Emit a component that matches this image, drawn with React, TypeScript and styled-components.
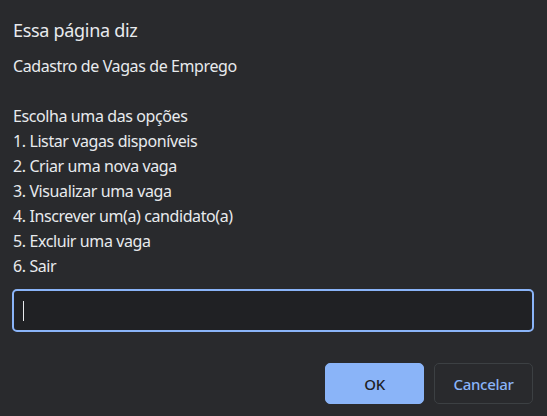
import React from "react"
import styled, { createGlobalStyle } from "styled-components"

const GlobalStyle = createGlobalStyle`
    html, body {
        margin: 0;
        padding: 0;
        background: #292a2d;
    }
    body {
        font-family: "Noto Sans", "Open Sans", sans-serif;
        color: #e8eaed;
    }
`

const Dialog = styled.div`
    width: 547px;
    height: 416px;
    box-sizing: border-box;
    padding: 18px 13px 12px 12px;
    display: flex;
    flex-direction: column;
    background: #292a2d;
`

const Title = styled.h1`
    margin: 0 0 0 1px;
    font-size: 18px;
    line-height: 24px;
    font-weight: 400;
    letter-spacing: -0.3px;
`

const Message = styled.div`
    margin: 12px 0 0 1px;
    font-size: 16px;
    line-height: 25px;
    letter-spacing: -0.4px;
    white-space: pre-line;
`

const Field = styled.div`
    margin-top: 10px;
    height: 43px;
    box-sizing: border-box;
    border: 2px solid #8ab4f8;
    border-radius: 5px;
    background: #202124;
    display: flex;
    align-items: center;
    padding-left: 9px;
`

const Caret = styled.span`
    width: 1px;
    height: 20px;
    background: #e8eaed;
`

const Actions = styled.div`
    margin-top: auto;
    display: flex;
    justify-content: flex-end;
    gap: 10px;
    padding-right: 1px;
`

const Button = styled.button<{ $primary?: boolean }>`
    width: 99px;
    height: 41px;
    box-sizing: border-box;
    border-radius: 5px;
    font-family: inherit;
    font-size: 15px;
    font-weight: 500;
    letter-spacing: -0.3px;
    cursor: pointer;
    border: 1px solid ${({ $primary }) => ($primary ? "#8ab4f8" : "#3c4043")};
    background: ${({ $primary }) => ($primary ? "#8ab4f8" : "#292a2d")};
    color: ${({ $primary }) => ($primary ? "#202124" : "#8ab4f8")};
`

const message = `Cadastro de Vagas de Emprego

Escolha uma das opções
1. Listar vagas disponíveis
2. Criar uma nova vaga
3. Visualizar uma vaga
4. Inscrever um(a) candidato(a)
5. Excluir uma vaga
6. Sair`

const App = () => {
    return (
        <>
            <GlobalStyle />
            <Dialog>
                <Title>Essa página diz</Title>
                <Message>{message}</Message>
                <Field>
                    <Caret />
                </Field>
                <Actions>
                    <Button $primary>OK</Button>
                    <Button>Cancelar</Button>
                </Actions>
            </Dialog>
        </>
    )
}

export default App
